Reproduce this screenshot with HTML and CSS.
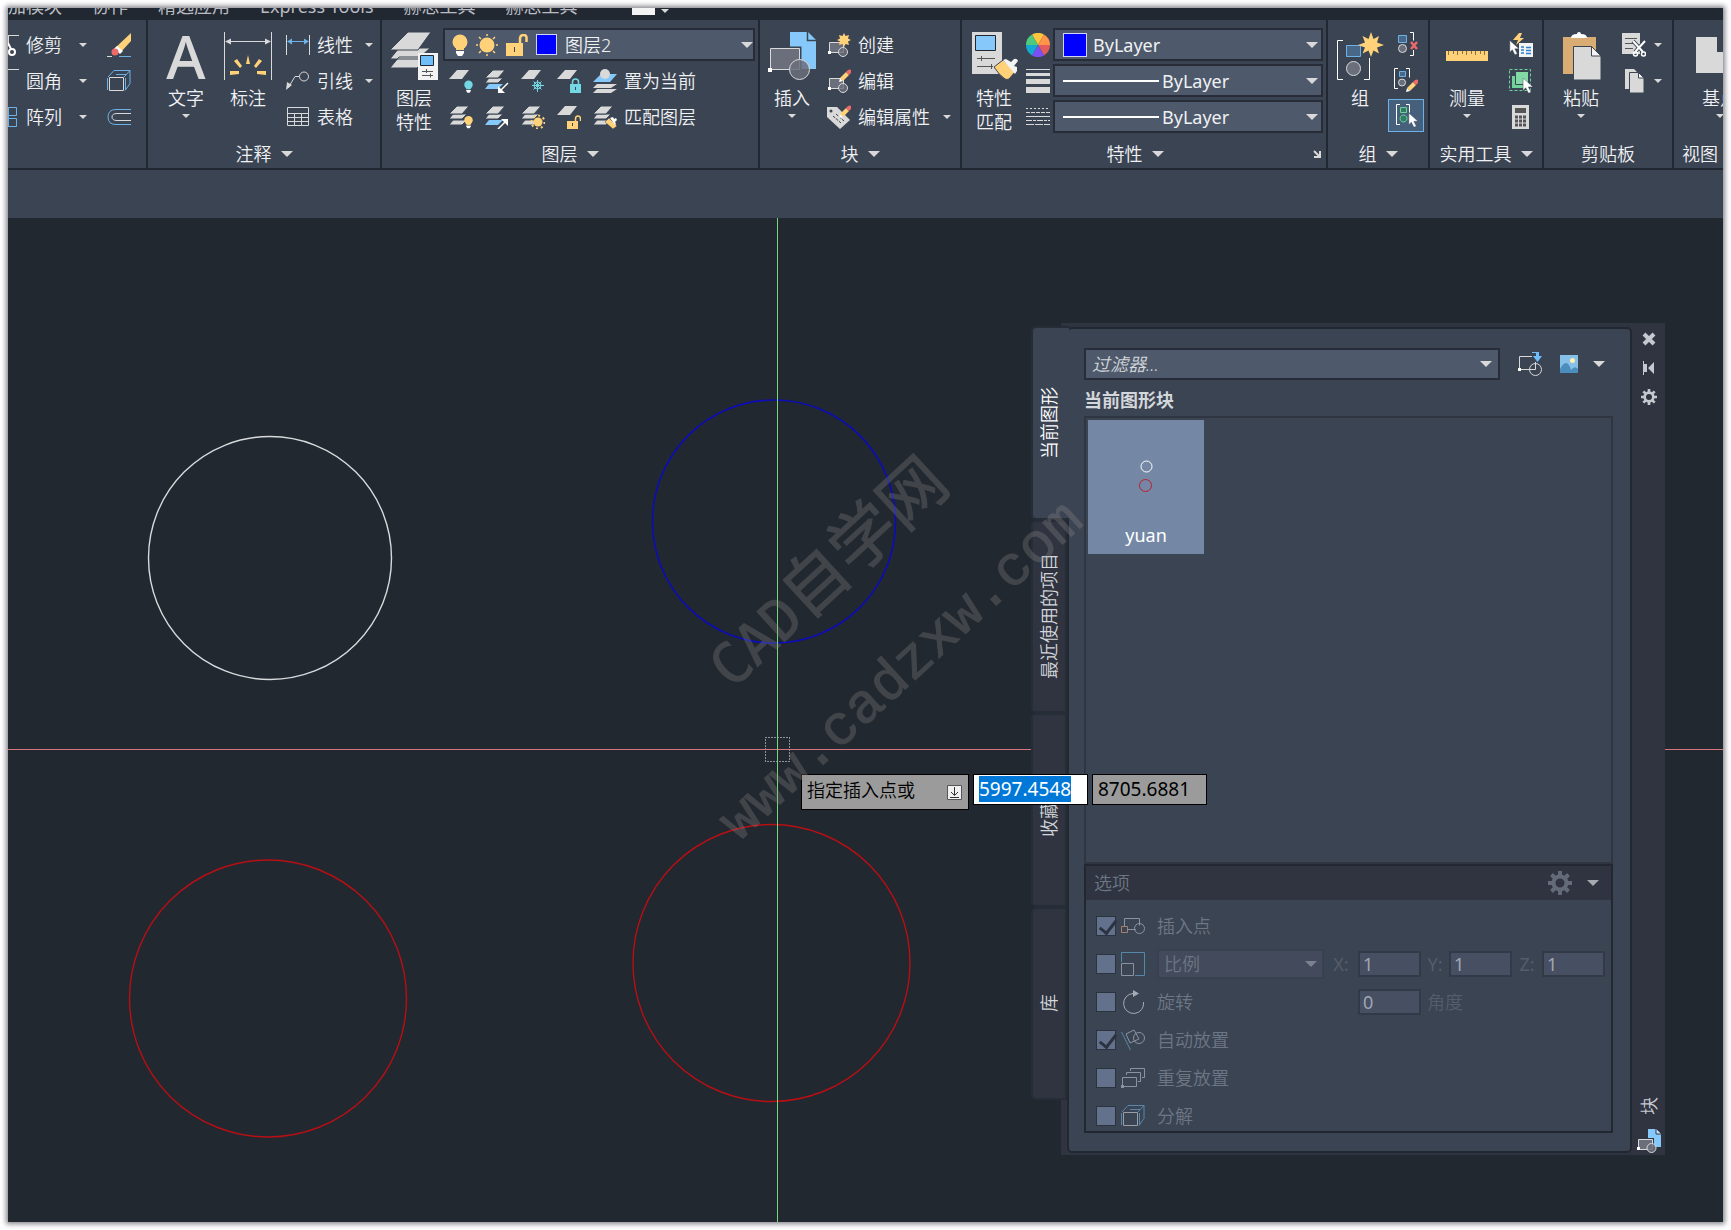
FILE: index.html
```html
<!DOCTYPE html>
<html lang="zh-CN">
<head>
    <meta charset="UTF-8">
    <meta name="viewport" content="width=device-width, initial-scale=1.0">
    <title>CAD</title>
    <link rel="stylesheet" href="styles.css">
</head>
<body>
    <!-- Shared symbols -->
    <svg class="sprite" aria-hidden="true">
        <symbol id="caret" viewBox="0 0 12 6"><path d="M0 0h12L6 6z" fill="currentColor"/></symbol>
        <symbol id="layers" viewBox="0 0 24 24">
            <path d="M0 20l4-5h14l-5 5zM0 14l4-5h14l-5 5z" fill="#d9d9d9" stroke="#3b4453"/>
            <path d="M0 9l8-8h12l-7 8z" fill="#d9d9d9" stroke="#3b4453"/>
        </symbol>
        <symbol id="sheet" viewBox="0 0 24 24"><path d="M0 10l8-9h12l-7 9z" fill="#d9d9d9"/></symbol>
        <symbol id="bulb" viewBox="0 0 16 22">
            <circle cx="8" cy="8" r="7.500" fill="currentColor"/><path d="M4 12h8v4H4z" fill="currentColor"/>
            <path d="M4 17h8v2l-2 3H6l-2-3z" fill="#fff"/>
        </symbol>
        <symbol id="block" viewBox="0 0 24 24">
            <path d="M2.500 9.500h14v10h-14z" fill="#6b6f7b" stroke="#d9d9d9"/>
            <circle cx="16" cy="19" r="4.500" fill="#6b6f7b" fill-opacity=".8" stroke="#d9d9d9"/>
            <path d="M1 18h3v3H1z" fill="#fff"/>
        </symbol>
        <symbol id="pencil" viewBox="0 0 14 14">
            <path d="M1 13l1-4 3 3z" fill="#fff"/><path d="M2 9l6-6 3 3-6 6z" fill="#ffd27a"/><path d="M8 3l2-2q2-1 3 0t0 3l-2 2z" fill="#ee6a6a"/>
        </symbol>
        <symbol id="arrow" viewBox="0 0 12 18"><path d="M1 0v14l3-3 3 6 3-1-3-6h5z" fill="#fff" stroke="#3b4453" stroke-width=".5"/></symbol>
        <symbol id="cube" viewBox="0 0 24 24">
            <path d="M.5 21V9M1 8l6-6.500h16v13l-5 7M17 8l6-6.500M9 5.500h10" fill="none" stroke="#6cb2e8"/>
            <path d="M2.500 8.500h14v13h-14z" fill="#3b4453" stroke="#d9d9d9"/>
            <path d="M18.500 9v12" stroke="#6cb2e8"/>
        </symbol>
        <symbol id="gear" viewBox="0 0 24 24">
            <circle cx="12" cy="12" r="6.500" fill="none" stroke="currentColor" stroke-width="4"/>
            <path d="M12 0v5M12 19v5M0 12h5M19 12h5M3.500 3.500L7 7M17 17l3.500 3.500M3.500 20.500L7 17M17 7l3.500-3.500" stroke="currentColor" stroke-width="4"/>
        </symbol>
        <symbol id="insert" viewBox="0 0 48 48">
            <path d="M22 0h18l8 8v29H22z" fill="#86c8fa"/><path d="M39.500 0v8.500H48" fill="#86c8fa" stroke="#3b4453" stroke-width="1.500"/>
            <path d="M2.500 16.500h29v21h-29z" fill="#6b6f7b" stroke="#3b4453" stroke-width="4"/>
            <path d="M2.500 16.500h29v21h-29z" fill="#6b6f7b" stroke="#d9d9d9"/>
            <circle cx="31.500" cy="37.500" r="10" fill="#6b6f7b" fill-opacity=".85" stroke="#d9d9d9"/>
            <path d="M0 36h4v4H0z" fill="#fff"/>
        </symbol>
        <symbol id="insert-small" viewBox="0 0 24 24">
            <path d="M11 0h8l5 5v13H11z" fill="#86c8fa"/><path d="M19 0v5h5" fill="#cfe8fb" stroke="#2f3440"/>
            <path d="M1.500 10.500h14v10h-14z" fill="#6b6f7b" stroke="#2f3440" stroke-width="3"/>
            <path d="M1.500 10.500h14v10h-14z" fill="#6b6f7b" stroke="#d9d9d9"/>
            <circle cx="14.500" cy="19" r="4.500" fill="#6b6f7b" fill-opacity=".85" stroke="#d9d9d9"/>
            <path d="M0 18h3v3H0z" fill="#fff"/>
        </symbol>
    </svg>

    <div class="app">
        <nav class="menu-tabs">
            <a href="#">附加模块</a>
            <a href="#">协作</a>
            <a href="#">精选应用</a>
            <a href="#">Express Tools</a>
            <a href="#">赫思工具</a>
            <a href="#">赫思工具</a>
            <button class="menu-toggle" aria-label="最小化"><span></span><svg class="caret small"><use href="#caret"/></svg></button>
        </nav>

        <header class="ribbon">
            <!-- Modify -->
            <section class="panel modify">
                <div class="panel-body">
                    <div class="rows">
                        <button class="row"><svg width="12" height="24"><path d="M0 2.500h11M.5 3v8" fill="none" stroke="#d9d9d9"/><circle cx="4" cy="19" r="3" fill="none" stroke="#fff" stroke-width="2"/><path d="M0 10l3 6" stroke="#fff" stroke-width="2"/></svg>修剪<svg class="caret small"><use href="#caret"/></svg></button>
                        <button class="row"><svg width="12" height="24"><path d="M0 .500h11" stroke="#d9d9d9"/></svg>圆角<svg class="caret small"><use href="#caret"/></svg></button>
                        <button class="row"><svg width="12" height="24"><path d="M0 2.500h8.500v8H0M0 13.500h8.500v8H0M.5 2v20" fill="none" stroke="#6cb2e8"/></svg>阵列<svg class="caret small"><use href="#caret"/></svg></button>
                    </div>
                    <div class="rows">
                        <button class="row" aria-label="删除"><svg width="24" height="24"><path d="M7 16L24 0v8L13 20z" fill="#ffd27a"/><path d="M7 16l3-3 6 5-3 3z" fill="#fff"/><circle cx="8" cy="19" r="3.500" fill="#ee6a6a"/><path d="M0 23.500h5" stroke="#d9d9d9"/><path d="M12 23.500h12" stroke="#6cb2e8"/></svg></button>
                        <button class="row" aria-label="分解"><svg width="24" height="24"><use href="#cube"/></svg></button>
                        <button class="row" aria-label="偏移"><svg width="24" height="24" fill="none"><path d="M24 4.500H9Q1 4.500 1 12t8 7.500h15" stroke="#6cb2e8"/><path d="M24 8.500H10Q5 8.500 5 12t5 3.500h14" stroke="#d9d9d9"/></svg></button>
                    </div>
                </div>
                <div class="panel-title"></div>
            </section>

            <!-- Annotation -->
            <section class="panel annotate">
                <div class="panel-body">
                    <button class="big"><span class="big-letter">A</span><span>文字</span><svg class="caret small"><use href="#caret"/></svg></button>
                    <button class="big">
                        <svg width="48" height="48"><path d="M.500 0v48M47.500 0v48M2 9.500h44" stroke="#d9d9d9"/><path d="M1 9.500l6-3v6zM47 9.500l-6-3v6z" fill="#d9d9d9"/><path d="M24 23l2 9h-4zM10 29l3-2 5 7-2 2zM38 29l-3-2-5 7 2 2zM6 39v4l9-1v-3zM42 39v4l-9-1v-3z" fill="#ffd27a"/></svg>
                        <span>标注</span>
                    </button>
                    <div class="rows">
                        <button class="row"><svg width="24" height="24"><path d="M.500 2v20M23.500 2v20" stroke="#d9d9d9"/><path d="M3 8.500h18" stroke="#6cb2e8"/><path d="M1 8.500l5-3v6zM23 8.500l-5-3v6z" fill="#6cb2e8"/></svg>线性<svg class="caret small"><use href="#caret"/></svg></button>
                        <button class="row"><svg width="24" height="24"><path d="M2 19L9 7.500h4" fill="none" stroke="#d9d9d9"/><circle cx="18" cy="7.500" r="4.500" fill="none" stroke="#d9d9d9"/><path d="M0 21l1-8 5 3z" fill="#d9d9d9"/></svg>引线<svg class="caret small"><use href="#caret"/></svg></button>
                        <button class="row"><svg width="24" height="24"><path d="M1.500 2.500h21v18h-21zM1 8.500h22M1 12.500h22M1 16.500h22M8.500 8v12M15.500 8v12" fill="none" stroke="#d9d9d9"/></svg>表格</button>
                    </div>
                </div>
                <div class="panel-title"><button>注释<svg class="caret"><use href="#caret"/></svg></button></div>
            </section>

            <!-- Layers -->
            <section class="panel layers">
                <div class="panel-body">
                    <button class="big">
                        <svg width="48" height="48"><path d="M0 36l9-11h30L27 36zM0 27l9-11h31L28 27z" fill="#d9d9d9" stroke="#3b4453"/><path d="M0 18L18 0h23L28 18z" fill="#d9d9d9" stroke="#3b4453"/><path d="M28 21h20v27H28z" fill="#f3f3f3"/><path d="M30.500 23.500h13v10h-13z" fill="#6fbefa" stroke="#222831"/><path d="M32 39.500h11M32 43.500h11M36.500 37v4M40.500 41.500v4" stroke="#555"/></svg>
                        <span>图层</span><span>特性</span>
                    </button>
                    <div class="rows">
                        <div class="slot">
                            <div class="combo layer-combo">
                                <svg class="bulb-icon" width="16" height="22"><use href="#bulb"/></svg>
                                <svg width="22" height="22"><circle cx="11" cy="11" r="7.500" fill="#ffd27a"/><path d="M11 0v2M11 20v2M0 11h2M20 11h2M3 3l2 2M17 17l2 2M3 19l2-2M17 5l2-2" stroke="#ffd27a" stroke-width="1.500"/></svg>
                                <svg width="22" height="22"><path d="M0 9h17v13H0z" fill="#ffd27a"/><path d="M14 9V5q0-4 3.500-4T20.500 5v3" fill="none" stroke="#ffd27a" stroke-width="2.500"/><path d="M8.500 13v5" stroke="#3b4453"/></svg>
                                <span class="swatch"></span>
                                <select aria-label="图层"><option>图层2</option></select>
                                <svg class="caret"><use href="#caret"/></svg>
                            </div>
                        </div>
                        <div class="tools">
                            <button aria-label="关"><svg width="24" height="24"><use href="#sheet"/><use href="#bulb" x="15" y="11" width="9" height="13" color="#73d8e3"/></svg></button>
                            <button aria-label="隔离"><svg width="24" height="24"><use href="#layers"/><path d="M0 20l4-5h14l-5 5z" fill="#86c8fa"/><path d="M23 14l-8 8" stroke="#fff" stroke-width="1.500"/><path d="M13 24v-7l7 7z" fill="#fff"/></svg></button>
                            <button aria-label="冻结"><svg width="24" height="24"><use href="#sheet"/><g stroke="#73d8e3" fill="none"><path d="M16.500 11v12M11 16.500h12M12.500 12.500l8 8M12.500 20.500l8-8"/><circle cx="16.500" cy="16.500" r="3.500"/></g></svg></button>
                            <button aria-label="锁定"><svg width="24" height="24"><use href="#sheet"/><path d="M13 15h11v9H13z" fill="#73d8e3"/><path d="M15.500 15v-2q0-3 3-3t3 3v2" fill="none" stroke="#73d8e3" stroke-width="1.500"/><path d="M18.500 18v3" stroke="#3b4453"/></svg></button>
                            <button class="wide"><svg width="24" height="24"><path d="M0 24l4-4h20l-6 4zM0 19l4-4h20l-6 4z" fill="#d9d9d9"/><path d="M0 13l8-8h16l-7 8z" fill="#86c8fa"/><circle cx="12" cy="5" r="5" fill="#d9d9d9"/></svg>置为当前</button>
                        </div>
                        <div class="tools">
                            <button aria-label="打开所有图层"><svg width="24" height="24"><use href="#layers"/><use class="bulb-icon" href="#bulb" x="15" y="10" width="9" height="14"/></svg></button>
                            <button aria-label="取消隔离"><svg width="24" height="24"><use href="#layers"/><path d="M0 20l4-5h14l-5 5z" fill="#86c8fa"/><path d="M13 24l8-8" stroke="#fff" stroke-width="1.500"/><path d="M23 14v7l-7-7z" fill="#fff"/></svg></button>
                            <button aria-label="解冻所有图层"><svg width="24" height="24"><use href="#layers"/><circle cx="17" cy="17" r="4.500" fill="#ffd27a"/><circle cx="17" cy="17" r="6.500" fill="none" stroke="#ffd27a" stroke-width="2" stroke-dasharray="2 3"/></svg></button>
                            <button aria-label="解锁"><svg width="24" height="24"><use href="#sheet"/><path d="M10 16h11v8H10z" fill="#ffd27a"/><path d="M18.500 16v-2q0-3 2.500-3t2.500 3v2" fill="none" stroke="#ffd27a" stroke-width="1.500"/><path d="M15.500 18v3" stroke="#3b4453"/></svg></button>
                            <button class="wide"><svg width="24" height="24"><use href="#layers"/><path d="M12 17l4-4 8 8-4 3z" fill="#ffd27a" stroke="#3b4453" stroke-width=".5"/><path d="M17 13l3-1 1 2 2-1 1 2-2 2 1 2-1 1z" fill="#fff"/></svg>匹配图层</button>
                        </div>
                    </div>
                </div>
                <div class="panel-title"><button>图层<svg class="caret"><use href="#caret"/></svg></button></div>
            </section>

            <!-- Block -->
            <section class="panel block">
                <div class="panel-body">
                    <button class="big"><svg width="48" height="48"><use href="#insert"/></svg><span>插入</span><svg class="caret small"><use href="#caret"/></svg></button>
                    <div class="rows">
                        <button class="row"><svg width="24" height="24"><use href="#block"/><path d="M17 0l1.500 3L22 2l-1 3.500 3 1.500-3 1.500 1 3.500-3.500-1L17 14l-1.500-3-3.500 1 1-3.500L10 7l3-1.500L12 2l3.500 1z" fill="#ffd27a"/></svg>创建</button>
                        <button class="row"><svg width="24" height="24"><use href="#block"/><use href="#pencil" x="11" y="0" width="14" height="14"/></svg>编辑</button>
                        <button class="row"><svg width="24" height="24"><path d="M0 2h10l13 13-10 9L0 12z" fill="#d9d9d9"/><circle cx="4" cy="6" r="1.500" fill="#3b4453"/><path d="M6 11l8 7M9 9l8 7" stroke="#3b4453" stroke-dasharray="3 1"/><use href="#pencil" x="11" y="0" width="14" height="14"/></svg>编辑属性<svg class="caret small"><use href="#caret"/></svg></button>
                    </div>
                </div>
                <div class="panel-title"><button>块<svg class="caret"><use href="#caret"/></svg></button></div>
            </section>

            <!-- Properties -->
            <section class="panel properties">
                <div class="panel-body">
                    <button class="big">
                        <svg width="48" height="48"><path d="M2 0h30v42H2z" fill="#d9d9d9"/><path d="M5.500 3.500h20v15h-20z" fill="#86c8fa" stroke="#222831"/><path d="M7 26.500h18M7 34.500h16M11.500 24v5M21.500 32v5" stroke="#555"/><path d="M24 35l9-7 12 12-6 7q-2 1-4 0-6-4-11-12z" fill="#ffd27a" stroke="#3b4453"/><path d="M33 28l3-1 5 3 3-3q3-1 4 2l-4 5 3 1v4l-2 3z" fill="#f3f3f3"/></svg>
                        <span>特性</span><span>匹配</span>
                    </button>
                    <div class="rows">
                        <div class="prop">
                            <svg width="24" height="24"><path d="M12 12L6 1.600A12 12 0 0 1 18 1.600z" fill="#ffc53d"/><path d="M12 12L18 1.600A12 12 0 0 1 24 12z" fill="#ff944a"/><path d="M12 12h12a12 12 0 0 1-6 10.400z" fill="#e45b5b"/><path d="M12 12l6 10.400a12 12 0 0 1-12 0z" fill="#7a4ff5"/><path d="M12 12L6 22.400A12 12 0 0 1 0 12z" fill="#14a9d0"/><path d="M12 12H0A12 12 0 0 1 6 1.600z" fill="#4fc97d"/></svg>
                            <div class="combo"><span class="swatch large"></span><select aria-label="颜色"><option>ByLayer</option></select><svg class="caret"><use href="#caret"/></svg></div>
                        </div>
                        <div class="prop">
                            <svg width="24" height="24"><path d="M0 0h24v1H0zM0 4h24v3H0zM0 10h24v5H0zM0 18h24v6H0z" fill="#d9d9d9"/></svg>
                            <div class="combo"><span class="line"></span><select aria-label="线宽"><option>ByLayer</option></select><svg class="caret"><use href="#caret"/></svg></div>
                        </div>
                        <div class="prop">
                            <svg width="24" height="24" stroke="#d9d9d9"><path d="M0 3.500h24" stroke-dasharray="2 2"/><path d="M0 7.500h24" stroke-dasharray="4 1"/><path d="M0 11.500h24"/><path d="M0 15.500h24" stroke-dasharray="6 1 3 1"/><path d="M0 19.500h24" stroke-dasharray="8 1"/></svg>
                            <div class="combo"><span class="line"></span><select aria-label="线型"><option>ByLayer</option></select><svg class="caret"><use href="#caret"/></svg></div>
                        </div>
                    </div>
                </div>
                <div class="panel-title">
                    <button>特性<svg class="caret"><use href="#caret"/></svg></button>
                    <button class="launcher" aria-label="特性选项板"><svg width="8" height="8"><path d="M1 1l5 5M7 1v6H1" fill="none" stroke="#d9d9d9" stroke-width="2"/></svg></button>
                </div>
            </section>

            <!-- Groups -->
            <section class="panel group">
                <div class="panel-body">
                    <button class="big">
                        <svg width="48" height="48"><path d="M7 8.500H1.500v39H7M28 47.500h5.500V26" fill="none" stroke="#fff"/><path d="M10.500 13.500h14v11h-14z" fill="#496887" stroke="#6cb2e8"/><circle cx="17.500" cy="36.500" r="7" fill="#6b6f7b" stroke="#d9d9d9"/><path d="M35 0l2.500 7L43 4l-2 6.500 7 2.500-7 2.500 2 6-5.500-3L35 25l-2.500-6.500-6 3 2.500-6L22 13l7-2.500L26.500 4l6 3z" fill="#ffd27a"/></svg>
                        <span>组</span>
                    </button>
                    <div class="rows">
                        <button class="tile" aria-label="解除编组"><svg width="24" height="24"><path d="M4.500 3.500h8v7h-8z" fill="#496887" stroke="#6cb2e8"/><circle cx="8.500" cy="16.500" r="4" fill="#6b6f7b" stroke="#d9d9d9"/><path d="M16 .500h3.500v8M19.500 18v5.500H16" fill="none" stroke="#fff"/><path d="M17 10l6 7M23 10l-6 7" stroke="#ee6a6a" stroke-width="2.500"/></svg></button>
                        <button class="tile" aria-label="组编辑"><svg width="24" height="24"><path d="M4 .500H.500v20H4M12 .500h3.500v9" fill="none" stroke="#fff"/><path d="M5.500 3.500h6v5h-6z" fill="#496887" stroke="#6cb2e8"/><circle cx="8" cy="14.500" r="3.500" fill="#6b6f7b" stroke="#d9d9d9"/><use href="#pencil" x="11" y="11" width="14" height="14"/></svg></button>
                        <button class="tile active" aria-label="组选择"><svg width="24" height="24"><path d="M6 .500H2.500v20H6M12 .500h3.500v8" fill="none" stroke="#fff"/><path d="M6.500 3.500h6v5h-6zM9.500 11a3.500 3.500 0 1 0 .1 0z" fill="#2f7d63" stroke="#6fd39a"/><use href="#arrow" x="14" y="9" width="10" height="15"/></svg></button>
                    </div>
                </div>
                <div class="panel-title"><button>组<svg class="caret"><use href="#caret"/></svg></button></div>
            </section>

            <!-- Utilities -->
            <section class="panel utilities">
                <div class="panel-body">
                    <button class="big">
                        <svg width="48" height="48"><path d="M3 19h42v10H3z" fill="#ffd27a"/><path d="M5.500 19v4M10.500 19v3M14.500 19v4M19.500 19v3M23.500 19v4M28.500 19v3M32.500 19v4M37.500 19v3M41.500 19v4" stroke="#8a7346"/></svg>
                        <span>测量</span><svg class="caret small"><use href="#caret"/></svg>
                    </button>
                    <div class="rows">
                        <button class="row" aria-label="快速选择"><svg width="24" height="24"><path d="M10 0L4 7h5l-2 5 8-7h-4l2-5z" fill="#ffd27a"/><path d="M10 10h14v14H10z" fill="#f3f3f3"/><path d="M12 14h3M12 17h3M12 20h3M17 14.500h5M17 17.500h5M17 20.500h5" stroke="#2a7fd4" stroke-width="1.500"/><use href="#arrow" x="0" y="7" width="10" height="16"/></svg></button>
                        <button class="row" aria-label="全部选择"><svg width="24" height="24"><path d="M.500.500h21v21H.500z" fill="none" stroke="#6fd39a" stroke-dasharray="3 2"/><path d="M3 7h13v12H3z" fill="#6fd39a"/><path d="M6.500 2.500h13v13h-13z" fill="#82d9a5" stroke="#3b4453"/><use href="#arrow" x="13" y="9" width="11" height="16"/></svg></button>
                        <button class="row" aria-label="快速计算器"><svg width="24" height="24"><path d="M3 0h17v24H3z" fill="#d9d9d9"/><path d="M6 3h11v5H6z" fill="#555"/><path d="M6 12h11M6 16h11M6 20h11" stroke="#555" stroke-width="3" stroke-dasharray="3 1"/></svg></button>
                    </div>
                </div>
                <div class="panel-title"><button>实用工具<svg class="caret"><use href="#caret"/></svg></button></div>
            </section>

            <!-- Clipboard -->
            <section class="panel clipboard">
                <div class="panel-body">
                    <button class="big">
                        <svg width="48" height="48"><path d="M6 5h33v37H6z" fill="#d9ac74"/><path d="M14 6q0-4 6-4 0-2 2-2t2 2q6 0 6 4z" fill="#fff"/><path d="M16.500 14.500h18L44 24v24H16.500z" fill="#d9d9d9" stroke="#3b4453"/><path d="M34.500 14.500V24H44z" fill="#f3f3f3" stroke="#3b4453"/></svg>
                        <span>粘贴</span><svg class="caret small"><use href="#caret"/></svg>
                    </button>
                    <div class="rows">
                        <button class="row" aria-label="剪切"><svg width="24" height="24"><path d="M0 0h18v21H0z" fill="#d9d9d9"/><path d="M3 5.500h12M3 10.500h8M3 15.500h8" stroke="#555"/><path d="M11 8l10 11M23 8L13 19" stroke="#3b4453" stroke-width="4"/><path d="M11 8l10 11M23 8L13 19" stroke="#fff" stroke-width="2"/><g fill="none" stroke="#fff" stroke-width="1.500"><circle cx="13.500" cy="21" r="2"/><circle cx="21.500" cy="21" r="2"/></g></svg><svg class="caret small"><use href="#caret"/></svg></button>
                        <button class="row" aria-label="复制"><svg width="24" height="24"><path d="M3 0h9l4 4v16H3z" fill="#d9d9d9"/><path d="M7.500 3.500h9L22 9v15H7.500z" fill="#d9d9d9" stroke="#3b4453"/><path d="M16.500 3.500V9H22z" fill="#fff" stroke="#3b4453"/></svg><svg class="caret small"><use href="#caret"/></svg></button>
                    </div>
                </div>
                <div class="panel-title"><button>剪贴板</button></div>
            </section>

            <!-- View -->
            <section class="panel view">
                <div class="panel-body">
                    <button class="big">
                        <svg width="48" height="48"><path d="M0 5h21v15h21v21H0z" fill="#d9d9d9"/></svg>
                        <span>基点</span><svg class="caret small"><use href="#caret"/></svg>
                    </button>
                </div>
                <div class="panel-title"><button>视图<svg class="caret"><use href="#caret"/></svg></button></div>
            </section>
        </header>

        <div class="toolbar-strip"></div>

        <main class="canvas">
            <svg class="drawing">
                <g fill="none" stroke-width="1.400">
                    <circle cx="262" cy="340" r="121.500" stroke="#d8dadc"/>
                    <circle cx="766" cy="303.500" r="121.500" stroke="#0c0cb8" stroke-width="1.600"/>
                    <circle cx="260" cy="780.500" r="138.500" stroke="#b80f14"/>
                    <circle cx="763.500" cy="745" r="138.500" stroke="#b80f14"/>
                </g>
                <path d="M757.500 519.500h24v24h-24z" fill="none" stroke="#fff" stroke-dasharray="1 2"/>
                <line x1="0" y1="531.500" x2="100%" y2="531.500" stroke="#d4757c"/>
                <line x1="769.500" y1="0" x2="769.500" y2="100%" stroke="#78d67c"/>
            </svg>

            <!-- Blocks palette -->
            <aside class="palette">
                <div class="palette-tabs">
                    <button class="active"><span>当前图形</span></button>
                    <button><span>最近使用的项目</span></button>
                    <button><span>收藏夹</span></button>
                    <button><span>库</span></button>
                </div>
                <div class="palette-frame">
                    <div class="palette-main">
                        <div class="filter-row">
                            <div class="combo filter"><input type="text" aria-label="过滤器" placeholder="过滤器..."><svg class="caret"><use href="#caret"/></svg></div>
                            <button aria-label="浏览块"><svg width="24" height="24"><path d="M14 4.500H1.500v13h16V10" fill="none" stroke="#d9d9d9"/><circle cx="17.500" cy="17.500" r="6" fill="none" stroke="#d9d9d9"/><path d="M0 16h3v3H0z" fill="#fff"/><path d="M14 0h7v4h3l-4.500 6L15 4h3V1h-4z" fill="#6fbefa"/></svg></button>
                            <button class="view-mode" aria-label="预览"><svg width="18" height="18"><path d="M0 0h18v18H0z" fill="#86bfe8"/><path d="M0 14q3-6 6-6t5 7q4-5 7-1v4H0z" fill="#4b8dbd"/><circle cx="12.500" cy="5.500" r="2.500" fill="#fdf0b0"/></svg><svg class="caret"><use href="#caret"/></svg></button>
                        </div>
                        <h2>当前图形块</h2>
                        <div class="block-list">
                            <button class="thumb">
                                <svg width="40" height="40" fill="none"><circle cx="20.500" cy="10.500" r="5.500" stroke="#fff"/><circle cx="19.500" cy="29.500" r="6" stroke="#c01c2c"/></svg>
                                <span>yuan</span>
                            </button>
                        </div>
                        <section class="options">
                            <header>选项
                                <span class="options-tools"><svg width="24" height="24"><use href="#gear"/></svg><svg class="caret"><use href="#caret"/></svg></span>
                            </header>
                            <div class="option-rows">
                                <div class="option">
                                    <input type="checkbox" id="opt-insert" checked>
                                    <svg width="24" height="24"><path d="M3.500 12V4.500h15v7M7 15.500h8" fill="none" stroke="#8b93a0"/><path d="M.500 12.500h6v6h-6z" fill="none" stroke="#a67f6e"/><circle cx="18.500" cy="14.500" r="5" fill="none" stroke="#8b93a0"/></svg>
                                    <label for="opt-insert">插入点</label>
                                </div>
                                <div class="option">
                                    <input type="checkbox" id="opt-scale" aria-label="比例">
                                    <svg width="24" height="24" fill="none"><path d="M.500 10V.500h23v23H14" stroke="#5787a8"/><path d="M.500 11.500h12v12H.500z" stroke="#8b93a0"/></svg>
                                    <div class="combo scale"><select aria-label="比例类型"><option>比例</option></select><svg class="caret"><use href="#caret"/></svg></div>
                                    <label class="axis" for="sx">X:</label><input type="text" id="sx" value="1">
                                    <label class="axis" for="sy">Y:</label><input type="text" id="sy" value="1">
                                    <label class="axis" for="sz">Z:</label><input type="text" id="sz" value="1">
                                </div>
                                <div class="option">
                                    <input type="checkbox" id="opt-rotate">
                                    <svg width="24" height="24"><path d="M14 3.500H12A10 10 0 1 0 22.500 12" fill="none" stroke="#a5abb5"/><path d="M12 0l6 3.500-6 3.500z" fill="#a5abb5"/></svg>
                                    <label for="opt-rotate">旋转</label>
                                    <input type="text" class="angle" id="angle" value="0">
                                    <label class="unit" for="angle">角度</label>
                                </div>
                                <div class="option">
                                    <input type="checkbox" id="opt-auto" checked>
                                    <svg width="24" height="24" fill="none"><path d="M.500 4l9 18" stroke="#5787a8"/><path d="M5 6l8-4 5 9-9 4z" stroke="#8b93a0"/><circle cx="18" cy="10" r="5.500" stroke="#8b93a0"/></svg>
                                    <label for="opt-auto">自动放置</label>
                                </div>
                                <div class="option">
                                    <input type="checkbox" id="opt-repeat">
                                    <svg width="24" height="24" fill="none" stroke="#8b93a0"><path d="M1.500 11.500h14v9h-14zM5.500 9V6.500h14v9H17M9.500 5V2.500h14v9H21"/><path d="M0 19h3v3H0z" fill="#8b93a0" stroke="none"/></svg>
                                    <label for="opt-repeat">重复放置</label>
                                </div>
                                <div class="option">
                                    <input type="checkbox" id="opt-explode">
                                    <svg class="dim" width="24" height="24"><use href="#cube"/></svg>
                                    <label for="opt-explode">分解</label>
                                </div>
                            </div>
                        </section>
                    </div>
                    <div class="palette-rail">
                        <button aria-label="关闭"><svg width="14" height="14"><path d="M2 2l10 10M12 2L2 12" stroke="currentColor" stroke-width="4"/></svg></button>
                        <button aria-label="自动隐藏"><svg width="14" height="14"><path d="M1.500 0v14" stroke="currentColor"/><path d="M1 3h4v8H1zM6 7l6-6v12z" fill="currentColor"/></svg></button>
                        <button aria-label="设置"><svg width="16" height="16"><use href="#gear"/></svg></button>
                        <span class="rail-title">块</span>
                        <svg width="24" height="24"><use href="#insert-small"/></svg>
                    </div>
                </div>
            </aside>

            <!-- Dynamic input -->
            <div class="dynamic-input">
                <div class="prompt"><span>指定插入点或</span><svg width="15" height="15"><path d="M.500.500h14v14H.500z" fill="#f0f0f0" stroke="#555"/><path d="M7.500 2v8M4 7l3.500 3.500L11 7M3 12.500h9" fill="none" stroke="#333"/></svg></div>
                <input type="text" class="coord-x" id="coord-x" aria-label="X" value="5997.4548">
                <input type="text" aria-label="Y" value="8705.6881">
            </div>

            <svg class="watermark">
                <text transform="translate(724 472) rotate(-42.600)"><tspan class="latin">CAD</tspan><tspan class="han">自学网</tspan></text>
                <text class="url" transform="translate(731 624) rotate(-42.600)">www.cadzxw.com</text>
            </svg>
        </main>
    </div>

    <script>
        document.getElementById('coord-x').select();
    </script>
</body>
</html>
```
FILE: styles.css
```css
* {
    margin: 0;
    padding: 0;
    box-sizing: border-box;
}
body {
    font-family: "Noto Sans", "Noto Sans CJK SC", sans-serif;
    font-size: 18px;
    font-weight: 350;
    line-height: 24px;
    color: #f0f1f3;
    background-color: #fff;
    overflow: hidden;
}
button, input, select {
    font: inherit;
    color: inherit;
    background: none;
    border: none;
    border-radius: 0;
    outline: none;
}
button {
    cursor: pointer;
    white-space: nowrap;
}
svg {
    display: block;
    flex: none;
}
.sprite {
    position: absolute;
    width: 0;
    height: 0;
}
.app {
    display: flex;
    flex-direction: column;
    min-height: calc(100vh - 16px);
    margin: 8px;
    background-color: #212830;
    box-shadow: 0 0 5px 2px #85858c;
}
.caret {
    width: 12px;
    height: 6px;
    color: #d9d9d9;
}
.caret.small {
    width: 8px;
    height: 4px;
}

/* Menu tabs */
.menu-tabs {
    display: flex;
    align-items: flex-end;
    gap: 30px;
    height: 12px;
    padding-bottom: 5px;
    overflow: hidden;
    font-weight: 400;
    background-color: #222831;
}
.menu-tabs a {
    flex: none;
    line-height: 18px;
    color: #b9bcc2;
    text-decoration: none;
}
.menu-tabs a:first-child {
    margin-left: -18px;
}
.menu-toggle {
    display: flex;
    align-items: flex-end;
    gap: 6px;
    margin-left: 24px;
}
.menu-toggle span {
    width: 23px;
    height: 16px;
    background-color: #f3f3f3;
}
.menu-toggle .caret {
    margin-bottom: 2px;
}

/* Ribbon */
.ribbon {
    display: flex;
    overflow: hidden;
    background-color: #3b4453;
    border-bottom: 2px solid #222831;
}
.panel {
    flex: none;
    padding: 7px 0 5px;
    border-right: 2px solid #222831;
}
.panel-body {
    display: flex;
    height: 108px;
}
.panel-title {
    display: flex;
    align-items: center;
    height: 18px;
    margin-top: 10px;
    line-height: 18px;
}
.panel-title button {
    display: flex;
    flex: 1;
    align-items: center;
    justify-content: center;
    gap: 9px;
}
.panel-title .launcher {
    flex: none;
    width: 18px;
}
.big {
    display: flex;
    flex: none;
    flex-direction: column;
    align-items: center;
    width: 48px;
    padding-top: 5px;
}
.big svg:first-child,
.big-letter {
    margin-bottom: 6px;
}
.big-letter {
    height: 48px;
    font-size: 60px;
    font-weight: 500;
    line-height: 48px;
    color: #d9d9d9;
}
.big .caret {
    margin-top: 4px;
}
.rows {
    display: flex;
    flex-direction: column;
}
.row {
    display: flex;
    align-items: center;
    gap: 7px;
    height: 36px;
}
.row .caret {
    margin-left: auto;
}
.modify {
    padding-right: 15px;
}
.modify .panel-body {
    gap: 20px;
}
.modify .rows:first-child {
    width: 79px;
}
.modify .row {
    gap: 6px;
}
.annotate .panel-body {
    gap: 14px;
    padding: 0 7px 0 14px;
}
.annotate .rows {
    width: 87px;
}
.layers .panel-body {
    gap: 5px;
    padding: 0 3px 0 8px;
}
.block .panel-body {
    gap: 11px;
    padding: 0 9px 0 8px;
}
.block .rows {
    width: 124px;
}
.properties .panel-body {
    gap: 8px;
    padding: 0 3px 0 8px;
}
.group .panel-body {
    gap: 4px;
    padding: 0 4px 0 8px;
}
.utilities .panel-body {
    gap: 18px;
    padding: 0 9px 0 13px;
}
.clipboard .panel-body {
    gap: 17px;
    padding: 0 10px 0 13px;
}
.clipboard .row {
    gap: 8px;
}
.view {
    flex: 1;
    min-width: 0;
    border-right: none;
}
.view .panel-body {
    padding-left: 16px;
}
.view .big {
    width: 60px;
}
.view .panel-title {
    padding-left: 8px;
}
.view .panel-title button {
    justify-content: flex-start;
}

/* Drop-downs */
.combo {
    display: flex;
    flex: 1;
    align-items: center;
    height: 33px;
    padding: 0 3px 0 8px;
    background-color: #4e5a6c;
    border: 2px solid #272c38;
}
.combo select,
.combo input {
    flex: 1;
    min-width: 0;
    height: 24px;
    line-height: 24px;
    appearance: none;
}
.prop select,
.thumb span {
    font-weight: 400;
}
.slot,
.prop {
    display: flex;
    align-items: center;
    height: 36px;
    padding-bottom: 1px;
}
.layer-combo {
    gap: 8px;
    width: 312px;
    padding: 0 0 0 7px;
}
.bulb-icon {
    color: #ffd27a;
}
.swatch {
    width: 21px;
    height: 21px;
    background-color: #0000fe;
    border: 1px solid #d5d3f5;
}
.swatch.large {
    width: 24px;
    height: 24px;
    margin-right: 6px;
}
.line {
    width: 96px;
    height: 2px;
    margin-right: 3px;
    background-color: #fff;
}
.prop {
    gap: 3px;
    width: 297px;
}
.tools {
    display: flex;
    gap: 12px;
    height: 36px;
    padding-left: 6px;
}
.tools .wide {
    display: flex;
    align-items: center;
    gap: 7px;
}
.tile {
    display: flex;
    align-items: center;
    justify-content: center;
    width: 36px;
    height: 33px;
    margin-bottom: 3px;
    border: 1px solid transparent;
}
.tile.active {
    background-color: #46607c;
    border-color: #6cb2e8;
}
.toolbar-strip {
    height: 48px;
    background-color: #3b4453;
}

/* Drawing area */
.canvas {
    position: relative;
    flex: 1;
    overflow: hidden;
}
.drawing,
.watermark {
    position: absolute;
    inset: 0;
    width: 100%;
    height: 100%;
}
.watermark {
    pointer-events: none;
    fill: #96928f;
    stroke: #96928f;
    stroke-width: 1px;
    opacity: 0.28;
}
.watermark .latin {
    font-family: "DejaVu Sans Mono", monospace;
    font-size: 56px;
}
.watermark .han {
    font-size: 66px;
    font-weight: 400;
}
.watermark .url {
    font-family: "Liberation Mono", monospace;
    font-size: 56px;
}

/* Blocks palette */
.palette {
    position: absolute;
    top: 105px;
    right: 58px;
    display: flex;
    width: 634px;
    height: 832px;
    color: #d3d6da;
    isolation: isolate;
}
.palette-tabs {
    z-index: 1;
    display: flex;
    flex-direction: column;
    width: 36px;
    margin: 3px -6px 55px 0;
}
.palette-tabs button {
    display: flex;
    flex: 1;
    align-items: center;
    justify-content: center;
    background-color: #2f3440;
    border: 2px solid #272d37;
    border-radius: 5px 0 0 5px;
}
.palette-tabs .active {
    margin-right: -2px;
    padding-right: 4px;
    color: #fff;
    background-color: #3b4453;
    border-right: none;
}
.palette-tabs span,
.rail-title {
    line-height: 18px;
    writing-mode: vertical-rl;
    text-orientation: sideways;
    transform: rotate(180deg);
}
.palette-frame {
    display: flex;
    flex: 1;
    min-width: 0;
    padding: 4px 0 2px 6px;
    background-color: #2f3440;
}
.palette-main {
    display: flex;
    flex: 1;
    flex-direction: column;
    min-width: 0;
    padding: 19px 17px 18px 15px;
    background-color: #3b4453;
    border: 2px solid #222831;
    border-radius: 5px;
}
.filter-row {
    display: flex;
    align-items: center;
    gap: 18px;
    padding-right: 8px;
}
.filter {
    height: 32px;
    padding: 0 6px;
}
.filter input::placeholder {
    font-style: italic;
    color: #d3d6da;
    opacity: 1;
}
.view-mode {
    display: flex;
    align-items: center;
    gap: 15px;
}
.palette-main h2 {
    margin: 8px 0 4px;
    font-size: 18px;
}
.block-list {
    flex: 1;
    padding: 2px;
    border: 2px solid #2f3541;
}
.thumb {
    display: flex;
    flex-direction: column;
    align-items: center;
    justify-content: flex-end;
    width: 116px;
    height: 134px;
    padding-bottom: 7px;
    background-color: #7488a6;
    color: #fff;
}
.thumb svg {
    margin-bottom: 27px;
}
.options {
    border: 2px solid #222831;
    color: #6d7684;
}
.options header {
    display: flex;
    align-items: center;
    justify-content: space-between;
    height: 34px;
    padding: 0 12px 0 8px;
    background-color: #2f3440;
}
.options-tools {
    display: flex;
    align-items: center;
    gap: 15px;
    color: #646b78;
}
.options-tools .caret {
    color: #a5a9b0;
}
.option-rows {
    display: grid;
    gap: 8px;
    padding: 11px 6px 0 10px;
}
.option {
    display: grid;
    grid-template-columns: 25px 36px 1fr 34px 63px 28px 63px 30px 63px;
    align-items: center;
    height: 30px;
}
.option input[type="checkbox"] {
    position: relative;
    width: 20px;
    height: 20px;
    appearance: none;
    background-color: #63718d;
    border: 1px solid #2b3240;
}
.option input[type="checkbox"]:checked::after {
    content: "";
    position: absolute;
    top: 0;
    left: 6px;
    width: 7px;
    height: 14px;
    border: solid #2b3240;
    border-width: 0 3px 3px 0;
    transform: rotate(38deg);
}
.option input[type="text"] {
    width: 100%;
    height: 26px;
    padding-left: 3px;
    font-weight: 400;
    color: #a0a6b2;
    background-color: #474f62;
    border: 2px solid #323a48;
}
.option .scale {
    height: 30px;
    padding: 0 5px;
    background-color: #424a5b;
    border-color: #384150;
}
.option .scale .caret {
    color: #7a828f;
}
.axis {
    justify-self: center;
    font-weight: 400;
    color: #555d6a;
}
.option .angle {
    grid-column: 5;
}
.unit {
    grid-column: 6 / 8;
    padding-left: 6px;
    color: #555d6a;
}
.dim {
    opacity: 0.6;
}
.palette-rail {
    display: flex;
    flex-direction: column;
    align-items: center;
    gap: 14px;
    width: 33px;
    padding-top: 4px;
    color: #c6c8cf;
}
.palette-rail button {
    height: 15px;
}
.rail-title {
    margin-top: auto;
}

/* Dynamic input */
.dynamic-input {
    position: absolute;
    top: 556px;
    left: 793px;
    display: flex;
    align-items: flex-start;
    gap: 4px;
    color: #000;
}
.prompt {
    display: flex;
    align-items: center;
    gap: 32px;
    width: 168px;
    height: 36px;
    padding-left: 5px;
    background-color: #9b9b9b;
    border: 1px solid #000;
}
.prompt span {
    padding-bottom: 4px;
}
.dynamic-input input {
    width: 115px;
    height: 31px;
    padding: 0 0 2px 5px;
    font-size: 19px;
    font-weight: 400;
    background-color: #9b9b9b;
    border: 1px solid #000;
}
.dynamic-input .coord-x {
    background-color: #fff;
}
.coord-x::selection {
    color: #fff;
    background-color: #0078d7;
}
```
